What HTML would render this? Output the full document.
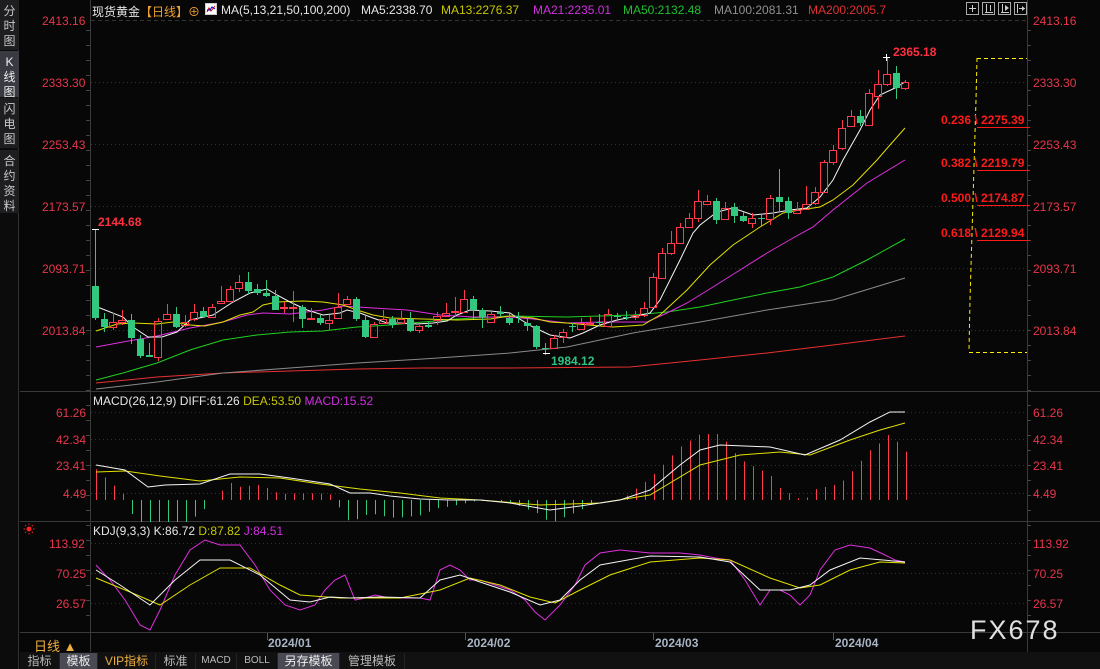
<!DOCTYPE html>
<html><head><meta charset="utf-8">
<style>
*{margin:0;padding:0;box-sizing:border-box}
body{width:1100px;height:669px;background:#070707;overflow:hidden;position:relative;font-family:"Liberation Sans","Noto Sans CJK SC",sans-serif;font-size:12px;color:#ddd}
.abs{position:absolute;white-space:nowrap}
.hd{position:absolute;white-space:nowrap;top:3px}
.side{position:absolute;left:0;top:0;width:19px;height:669px;background:#0c0c0c;border-right:1px solid #333}
.side div{position:absolute;left:0;width:19px;background:#1e1e21;color:#c8c8c8;font-size:12px;line-height:15px;text-align:center;padding-top:4px}
.ax{color:#e8364a;font-size:12px}
.tab{position:absolute;top:653px;height:16px;line-height:16px;font-size:12px;color:#bbb;text-align:center;border-right:1px solid #222}
</style></head><body>
<div class="side">
<div style="top:0;height:50px">分<br>时<br>图</div>
<div style="top:51px;height:46px;background:#3a3a42;color:#eee">K<br>线<br>图</div>
<div style="top:98px;height:50px">闪<br>电<br>图</div>
<div style="top:150px;height:63px">合<br>约<br>资<br>料</div>
</div>
<svg id="s" width="1100" height="669" style="position:absolute;left:0;top:0"></svg>

<div class="abs" style="left:92px;top:3px;color:#e6e6e6">现货黄金<span style="color:#f0a030">【日线】</span><span style="color:#f0a030">⊕</span></div>
<div class="abs" style="left:205px;top:3px;width:12px;height:12px;border:1px solid #ccc;background:#fff"><svg width="10" height="10" style="position:absolute;left:0;top:0"><polyline points="1,8 3,4 5,7 9,2" fill="none" stroke="#d00" stroke-width="1"/><polyline points="1,6 4,6 6,3 9,5" fill="none" stroke="#00c" stroke-width="1"/></svg></div>
<div class="hd" style="left:221px;color:#e6e6e6">MA(5,13,21,50,100,200)</div>
<div class="hd" style="left:361px;color:#e6e6e6">MA5:2338.70</div>
<div class="hd" style="left:441px;color:#c8c800">MA13:2276.37</div>
<div class="hd" style="left:533px;color:#d030e0">MA21:2235.01</div>
<div class="hd" style="left:623px;color:#20c030">MA50:2132.48</div>
<div class="hd" style="left:714px;color:#909090">MA100:2081.31</div>
<div class="hd" style="left:808px;color:#e03030">MA200:2005.7</div>

<div class="abs ax" style="left:42px;top:14px">2413.16</div>
<div class="abs ax" style="left:42px;top:76px">2333.30</div>
<div class="abs ax" style="left:42px;top:138px">2253.43</div>
<div class="abs ax" style="left:42px;top:200px">2173.57</div>
<div class="abs ax" style="left:42px;top:262px">2093.71</div>
<div class="abs ax" style="left:42px;top:324px">2013.84</div>
<div class="abs ax" style="left:1033px;top:14px">2413.16</div>
<div class="abs ax" style="left:1033px;top:76px">2333.30</div>
<div class="abs ax" style="left:1033px;top:138px">2253.43</div>
<div class="abs ax" style="left:1033px;top:200px">2173.57</div>
<div class="abs ax" style="left:1033px;top:262px">2093.71</div>
<div class="abs ax" style="left:1033px;top:324px">2013.84</div>

<div class="abs" style="left:98px;top:215px;color:#ff3040;font-weight:bold">2144.68</div>
<div class="abs" style="left:893px;top:45px;color:#ff3040;font-weight:bold">2365.18</div>
<div class="abs" style="left:551px;top:354px;color:#30c080;font-weight:bold">1984.12</div>

<div class="abs" style="left:941px;top:113px;color:#ff1a1a;font-weight:bold">0.236 \ 2275.39</div>
<div class="abs" style="left:941px;top:156px;color:#ff1a1a;font-weight:bold">0.382 \ 2219.79</div>
<div class="abs" style="left:941px;top:191px;color:#ff1a1a;font-weight:bold">0.500 \ 2174.87</div>
<div class="abs" style="left:941px;top:226px;color:#ff1a1a;font-weight:bold">0.618 \ 2129.94</div>

<div class="abs" style="left:93px;top:394px;color:#e6e6e6">MACD(26,12,9) DIFF:61.26 <span style="color:#c8c800">DEA:53.50</span> <span style="color:#d030e0">MACD:15.52</span></div>
<div class="abs ax" style="left:56px;top:406px">61.26</div>
<div class="abs ax" style="left:56px;top:433px">42.34</div>
<div class="abs ax" style="left:56px;top:459px">23.41</div>
<div class="abs ax" style="left:63px;top:487px">4.49</div>
<div class="abs ax" style="left:1033px;top:406px">61.26</div>
<div class="abs ax" style="left:1033px;top:433px">42.34</div>
<div class="abs ax" style="left:1033px;top:459px">23.41</div>
<div class="abs ax" style="left:1033px;top:487px">4.49</div>

<div class="abs" style="left:93px;top:524px;color:#e6e6e6">KDJ(9,3,3) K:86.72 <span style="color:#c8c800">D:87.82</span> <span style="color:#d030e0">J:84.51</span></div>
<div class="abs ax" style="left:49px;top:537px">113.92</div>
<div class="abs ax" style="left:56px;top:567px">70.25</div>
<div class="abs ax" style="left:56px;top:597px">26.57</div>
<div class="abs ax" style="left:1033px;top:537px">113.92</div>
<div class="abs ax" style="left:1033px;top:567px">70.25</div>
<div class="abs ax" style="left:1033px;top:597px">26.57</div>

<div class="abs" style="left:34px;top:636px;color:#f0b040;font-size:13px">日线 ▲</div>
<div class="abs" style="left:268px;top:636px;color:#a8b4c4;font-weight:bold">2024/01</div>
<div class="abs" style="left:467px;top:636px;color:#a8b4c4;font-weight:bold">2024/02</div>
<div class="abs" style="left:655px;top:636px;color:#a8b4c4;font-weight:bold">2024/03</div>
<div class="abs" style="left:835px;top:636px;color:#a8b4c4;font-weight:bold">2024/04</div>
<div class="abs" style="left:970px;top:615px;color:#e0e0e0;font-size:27px;letter-spacing:2px">FX678</div>

<div style="position:absolute;left:20px;top:652px;width:1080px;height:17px;background:#111"></div>
<div class="tab" style="left:20px;width:40px">指标</div>
<div class="tab" style="left:60px;width:38px;background:#4a4a55;color:#eee">模板</div>
<div class="tab" style="left:98px;width:58px;color:#f0b040">VIP指标</div>
<div class="tab" style="left:156px;width:40px">标准</div>
<div class="tab" style="left:196px;width:41px;font-size:10px">MACD</div>
<div class="tab" style="left:237px;width:41px;font-size:10px">BOLL</div>
<div class="tab" style="left:278px;width:62px;background:#4a4a55;color:#eee">另存模板</div>
<div class="tab" style="left:340px;width:65px">管理模板</div>

<script>
var s=document.getElementById('s'),h='';
function L(x1,y1,x2,y2,c,w,d){h+='<line x1="'+x1+'" y1="'+y1+'" x2="'+x2+'" y2="'+y2+'" stroke="'+c+'" stroke-width="'+(w||1)+'"'+(d?' stroke-dasharray="'+d+'"':'')+'/>';}
function P(pts,c,w,d){h+='<polyline points="'+pts.map(function(p){return p.join(',')}).join(' ')+'" fill="none" stroke="'+c+'" stroke-width="'+(w||1)+'"'+(d?' stroke-dasharray="'+d+'"':'')+'/>';}
L(90.5,0,90.5,652,'#3a3a3a');L(1027.5,0,1027.5,652,'#3a3a3a');
L(20,391.5,1100,391.5,'#3a3a3a');L(20,521.5,1100,521.5,'#3a3a3a');L(20,632.5,1100,632.5,'#3a3a3a');L(20,652.5,1100,652.5,'#3a3a3a');
[20,82,144,206,268,330,412,439,465,493,543,573,603].forEach(function(y,i){L(91,y+.5,1027,y+.5,'#333',1,i==0?'4,3':'1,3');});
[267,465,653,833].forEach(function(x){L(x+.5,633,x+.5,640,'#555');});
for(var y=30;y<630;y+=15){L(86,y+.5,90,y+.5,'#444');L(1027,y+.5,1031,y+.5,'#444');}
P([[96,383],[157,377],[223,373],[290,371],[357,369],[423,368],[510,368],[630,367],[700,360],[767,353],[833,345],[905,336]],'#e83030');
P([[96,389],[157,382],[223,373],[290,368],[357,363],[423,359],[510,353],[567,347],[633,333],[700,322],[767,310],[833,300],[905,278]],'#8a8a8a');
P([[96,380],[123,373],[157,363],[190,350],[223,340],[257,335],[290,332],[323,331],[357,327],[390,325],[423,322],[457,319],[510,316],[567,317],[633,315],[667,312],[700,307],[733,300],[767,293],[800,287],[833,277],[867,260],[905,239]],'#20d020');
P([[96,347],[123,342],[157,336],[190,328],[223,322],[247,315],[263,313],[290,314],[323,310],[343,306],[373,308],[407,310],[440,315],[473,317],[510,317],[533,319],[567,323],[600,322],[647,322],[667,313],[687,303],[713,287],[740,270],[767,253],[793,238],[813,227],[833,210],[867,183],[905,160]],'#e030e0');
P([[96,331],[117,324],[133,323],[157,324],[173,322],[190,325],[205,326],[223,322],[240,315],[253,312],[263,305],[277,302],[303,301],[323,302],[343,305],[357,310],[373,315],[390,318],[423,319],[457,320],[490,319],[510,316],[533,318],[550,322],[567,323],[600,326],[613,327],[643,325],[660,315],[687,290],[710,265],[733,245],[760,227],[783,213],[800,210],[820,207],[833,200],[853,185],[877,160],[890,145],[905,128]],'#e0e000');
P([[96,307],[100,308],[123,317],[133,327],[148,337],[162,337],[177,332],[190,320],[213,315],[233,302],[250,293],[267,289],[277,295],[290,302],[307,310],[323,315],[340,313],[347,310],[360,313],[373,318],[387,323],[400,323],[417,324],[433,323],[447,321],[457,315],[470,310],[490,311],[510,313],[513,315],[533,327],[550,335],[570,338],[583,333],[600,325],[617,320],[637,316],[650,313],[660,300],[680,260],[693,233],[700,225],[717,212],[733,208],[753,215],[773,213],[790,210],[807,208],[820,197],[833,180],[843,160],[860,130],[870,110],[880,95],[895,88],[905,82]],'#f4f4f4');
var C=[[286,318,229,320,'g'],[319,327,313,332,'g'],[322,327,313,330,'r'],[320,322,310,325,'r'],[320,338,314,344,'g'],[339,356,335,358,'g'],[355,357,343,357,'g'],[321,357,318,361,'r'],[314,319,304,319,'r'],[314,327,307,328,'g'],[322,325,315,327,'r'],[312,319,304,321,'r'],[311,317,307,317,'g'],[307,317,304,317,'r'],[301,303,286,303,'r'],[289,301,286,301,'r'],[282,288,275,292,'r'],[282,291,272,294,'g'],[289,293,284,295,'g'],[293,296,280,297,'g'],[296,310,290,310,'g'],[307,308,302,313,'r'],[307,308,291,322,'r'],[307,319,305,328,'g'],[318,319,308,319,'r'],[318,323,315,325,'g'],[320,323,315,330,'r'],[307,318,293,318,'r'],[299,304,296,305,'r'],[299,319,297,321,'g'],[320,337,315,338,'g'],[324,337,322,337,'r'],[319,323,310,323,'r'],[319,325,316,328,'g'],[319,323,311,323,'r'],[319,331,312,332,'g'],[326,330,325,333,'r'],[325,327,322,328,'g'],[316,320,312,325,'r'],[313,316,303,317,'r'],[311,312,297,317,'r'],[299,312,290,312,'r'],[299,310,296,319,'g'],[310,317,308,328,'g'],[314,322,310,322,'r'],[312,314,306,316,'g'],[318,323,312,325,'g'],[316,317,312,323,'g'],[323,326,317,331,'g'],[326,347,325,349,'g'],[348,349,343,355,'g'],[338,348,335,348,'r'],[332,337,329,343,'r'],[326,327,323,332,'g'],[323,329,318,330,'r'],[323,324,317,325,'r'],[322,323,314,326,'g'],[314,326,309,327,'r'],[316,317,313,321,'g'],[317,318,311,320,'g'],[315,317,311,320,'r'],[308,315,302,317,'r'],[277,307,273,308,'r'],[253,278,248,278,'r'],[243,253,231,255,'r'],[227,243,223,243,'r'],[218,227,213,228,'r'],[201,218,190,222,'r'],[201,204,195,205,'r'],[201,220,198,224,'g'],[208,219,202,220,'r'],[207,216,203,223,'g'],[216,221,212,222,'g'],[218,223,213,228,'r'],[218,219,215,226,'g'],[198,219,195,225,'r'],[197,202,169,212,'g'],[201,213,197,219,'g'],[210,213,202,213,'r'],[204,209,186,209,'r'],[192,203,187,205,'r'],[162,192,160,193,'r'],[150,162,145,165,'r'],[128,148,120,150,'r'],[116,126,110,127,'r'],[116,123,110,126,'g'],[93,125,89,126,'r'],[84,96,70,109,'r'],[74,84,57,86,'r'],[73,88,66,99,'g'],[82,88,80,90,'r']];
C.forEach(function(c,i){var x=95+i*9,col=c[4]=='r'?'#ff3a4a':'#33c880';
 if(c[4]=='r'){L(x+.5,c[2],x+.5,c[0],col);L(x+.5,c[1],x+.5,c[3],col);h+='<rect x="'+(x-3.5)+'" y="'+(c[0]+.5)+'" width="7" height="'+Math.max(1,c[1]-c[0])+'" fill="none" stroke="'+col+'"/>';}
 else{L(x+.5,c[2],x+.5,c[3],col);h+='<rect x="'+(x-3)+'" y="'+c[0]+'" width="7" height="'+Math.max(1,c[1]-c[0])+'" fill="'+col+'"/>';}
});
L(92,229.5,99,229.5,'#fff');L(883,57.5,890,57.5,'#fff');L(886.5,54,886.5,61,'#fff');L(543,353.5,550,353.5,'#fff');
L(977,58.5,1027,58.5,'#ffee00',1,'4,3');P([[977,58],[976,100],[973,200],[970,300],[969,350]],'#ffee00',1,'4,3');L(969,352.5,1027,352.5,'#ffee00',1,'4,3');
[127,170,205,240].forEach(function(y){L(977,y+.5,1030,y+.5,'#ff1a1a');});
var DIFF=[[96,465],[125,470],[148,487],[165,485],[200,484],[230,474],[260,474],[290,478],[330,484],[350,493],[370,493],[390,496],[420,499],[450,500],[480,500],[510,503],[550,510],[580,506],[620,500],[650,490],[680,465],[700,450],[720,445],[770,447],[805,455],[840,440],[870,422],[890,412],[905,412]];
var DEA=[[96,472],[125,471],[160,476],[200,481],[240,477],[280,478],[320,484],[360,489],[400,493],[440,498],[480,500],[540,505],[600,503],[650,495],[700,465],[740,455],[780,452],[810,455],[850,440],[880,430],[905,423]];
function itp(a,x){for(var i=0;i<a.length-1;i++){if(x>=a[i][0]&&x<=a[i+1][0]){var t=(x-a[i][0])/(a[i+1][0]-a[i][0]);return a[i][1]+t*(a[i+1][1]-a[i][1]);}}return a[a.length-1][1];}
for(var i=0;i<91;i++){var x=96+i*9,v=2*(itp(DEA,x)-itp(DIFF,x))*2.2;if(Math.abs(v)<1)continue;if(v<-22)v=-22;L(x+.5,500,x+.5,500-v,v>0?'#ff3a4a':'#33c880');}
P(DEA,'#e0e000');P(DIFF,'#f4f4f4');
P([[96,565],[110,580],[125,600],[140,625],[150,630],[160,610],[175,575],[190,550],[205,540],[220,545],[240,545],[255,565],[270,590],[285,605],[300,610],[315,605],[325,590],[335,580],[345,575],[355,600],[365,598],[375,595],[390,598],[405,598],[420,598],[430,600],[440,570],[450,565],[460,570],[470,580],[480,580],[495,585],[510,590],[525,600],[535,612],[545,620],[560,605],[575,585],[585,565],[600,553],[620,550],[650,553],[680,553],[700,555],[715,558],[730,560],[745,580],[760,605],[770,590],[780,590],[790,595],[800,605],[810,595],[820,570],[835,550],[850,545],[870,548],[885,555],[895,560],[905,562]],'#e030e0');
P([[96,578],[130,592],[160,605],[190,585],[220,568],[250,568],[280,585],[300,595],[340,598],[400,598],[440,590],[470,578],[500,585],[530,597],[555,603],[580,590],[610,575],[650,562],[700,558],[730,560],[770,578],[800,588],[820,585],[850,570],[880,562],[905,563]],'#e0e000');
P([[96,570],[120,585],[150,605],[175,580],[200,560],[230,560],[260,575],[290,600],[310,602],[330,597],[350,598],[380,597],[420,598],[440,580],[460,575],[480,582],[510,592],[540,605],[560,600],[580,580],[600,565],[650,556],[700,557],[730,562],[760,590],[790,590],[810,585],[830,570],[860,558],[905,562]],'#f4f4f4');
h+='<circle cx="29" cy="529" r="2.5" fill="#ff2020"/>';
[0,45,90,135,180,225,270,315].forEach(function(a){var r=a*Math.PI/180;L(29+4*Math.cos(r),529+4*Math.sin(r),29+5.5*Math.cos(r),529+5.5*Math.sin(r),'#ff2020');});
[966,982,998,1014].forEach(function(x){h+='<rect x="'+(x+.5)+'" y="2.5" width="12" height="12" fill="none" stroke="#aaa"/>';});
L(972.5,5,972.5,12,'#ccc');L(969,8.5,976,8.5,'#ccc');
L(986.5,4,986.5,13,'#ccc');L(985,12.5,993,12.5,'#ccc');L(990.5,5,990.5,11,'#ccc');
L(1002.5,4,1002.5,13,'#ccc');L(1001,12.5,1009,12.5,'#ccc');h+='<polygon points="1005,5 1009,8 1005,11" fill="#ccc"/>';
L(1017.5,4,1017.5,13,'#ccc');L(1019,8.5,1025,8.5,'#ccc');h+='<polygon points="1022,6 1025,8.5 1022,11" fill="#ccc"/>';
s.innerHTML=h;
</script>
</body></html>
